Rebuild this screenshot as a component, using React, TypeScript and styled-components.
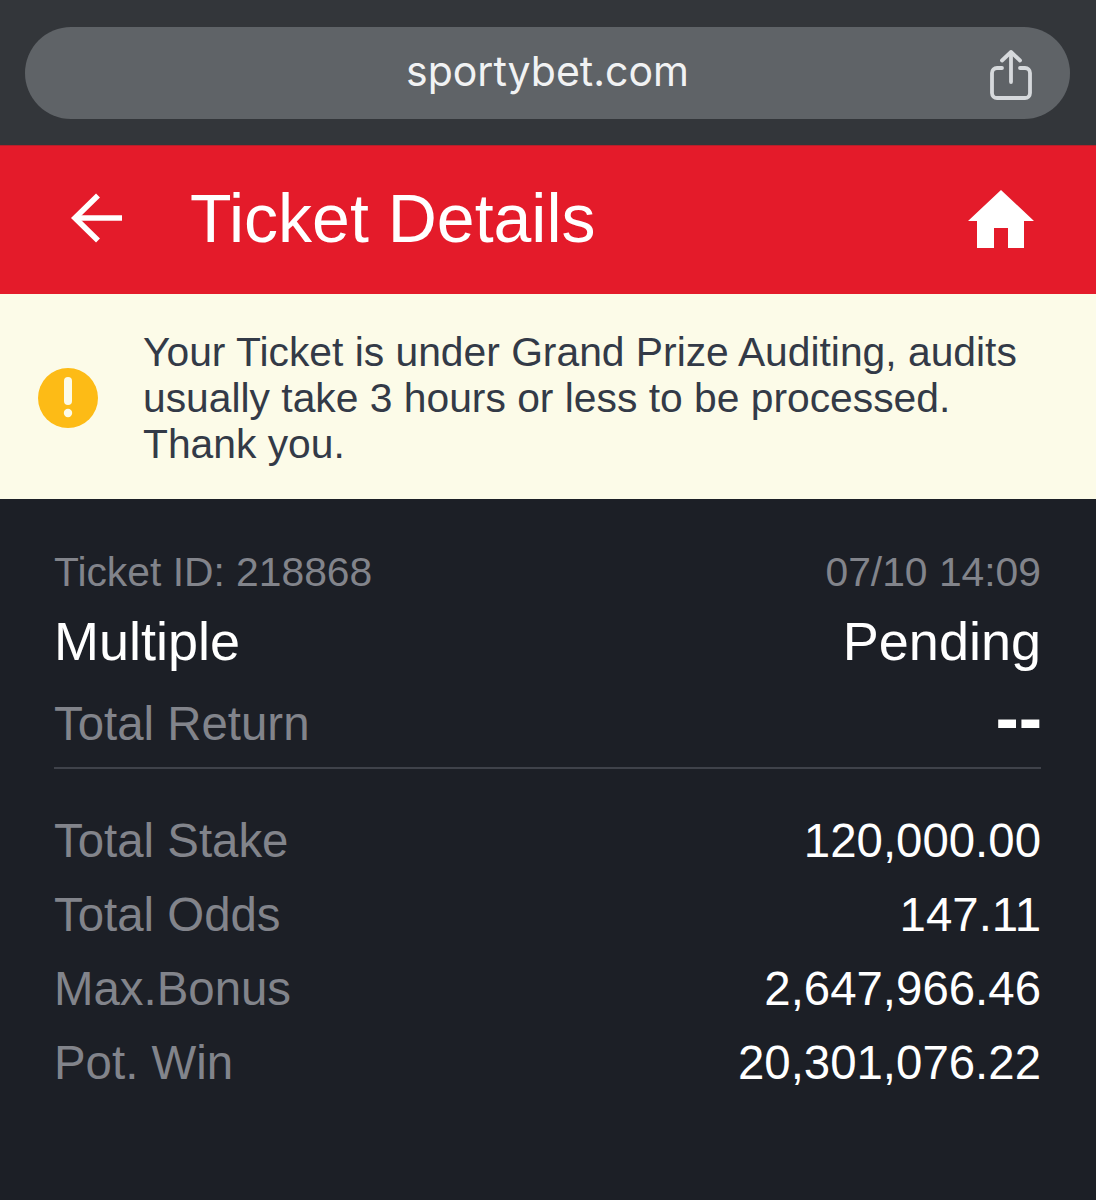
import styled, { createGlobalStyle } from "styled-components";

const GlobalStyle = createGlobalStyle`
    html, body {
        margin: 0;
        padding: 0;
        background-color: #1c1f26;
    }
    * {
        box-sizing: border-box;
    }
`;

const Page = styled.div`
    width: 1096px;
    min-height: 1200px;
    background-color: #1c1f26;
    font-family: "Liberation Sans", Arial, sans-serif;
    display: flex;
    flex-direction: column;
`;

const BrowserBar = styled.div`
    height: 145px;
    padding: 27px 26px 26px 25px;
    background-color: #33363a;
`;

const UrlPill = styled.div`
    height: 92px;
    border-radius: 46px;
    background-color: #5f6367;
    padding: 0 38px 0 0;
    display: grid;
    grid-template-columns: 1fr auto;
    align-items: center;
`;

const UrlText = styled.span`
    font-family: "Inter", "Liberation Sans", sans-serif;
    color: #f1f2f3;
    font-size: 41px;
    font-weight: 400;
    text-align: center;
    margin-left: 80px;
    margin-top: -4px;
`;

const ShareSvg = styled.svg`
    margin-top: 3px;
`;

const Header = styled.header`
    height: 149px;
    background-color: #e41b2a;
    border-top: 1px solid #b5202a;
    display: flex;
    align-items: center;
    padding: 0 62px 0 70px;
`;

const BackSvg = styled.svg`
    margin-top: -5px;
`;

const HomeSvg = styled.svg`
    margin-top: -3px;
`;

const Title = styled.h1`
    margin: -4px auto 0 66px;
    color: #fff;
    font-size: 68px;
    font-weight: 400;
`;

const Notice = styled.div`
    height: 205px;
    background-color: #fcfbe8;
    display: flex;
    align-items: center;
    padding: 2px 60px 0 38px;
    gap: 45px;
`;

const WarningSvg = styled.svg`
    flex-shrink: 0;
`;

const NoticeText = styled.p`
    margin: 0;
    color: #333a47;
    font-size: 40.8px;
    line-height: 46px;
`;

const Details = styled.section`
    padding: 50px 55px 0 54px;
`;

const Row = styled.div<{ $height: number }>`
    height: ${(props) => props.$height}px;
    display: flex;
    justify-content: space-between;
    align-items: center;
`;

const Label = styled.span<{ $size?: number }>`
    color: #82848b;
    font-size: ${(props) => props.$size ?? 47.4}px;
`;

const Value = styled.span<{ $size?: number }>`
    color: #fff;
    font-size: ${(props) => props.$size ?? 47.4}px;
`;

const EmptyValue = styled.span`
    color: #fff;
    font-size: 70px;
    font-weight: 700;
    line-height: 1;
    margin: 0 -1px 10px 0;
`;

const Divider = styled.div`
    height: 2px;
    background-color: #3f424a;
    margin: 8px 0 34px;
`;

function ShareIcon() {
    return (
        <ShareSvg width="42" height="50" viewBox="0 0 42 50" fill="none" stroke="#d6d9dc" strokeWidth="3.8" strokeLinecap="round" strokeLinejoin="round">
            <path d="M21 32V2.500" />
            <path d="M12 10.500L21 2L30 10.500" />
            <path d="M12 18H7a5 5 0 0 0-5 5V43a5 5 0 0 0 5 5H35a5 5 0 0 0 5-5V23a5 5 0 0 0-5-5H30" />
        </ShareSvg>
    );
}

function BackArrow() {
    return (
        <BackSvg width="54" height="52" viewBox="0 0 54 52" fill="none" stroke="#fff" strokeWidth="5.600">
            <path d="M52 26H5" />
            <path d="M28 3.500L5 26L28 48.500" />
        </BackSvg>
    );
}

function HomeIcon() {
    return (
        <HomeSvg width="66" height="58" viewBox="0 0 66 58" fill="#fff">
            <path d="M33 0L66 31H56V58H40V38H26V58H9V31H0Z" />
        </HomeSvg>
    );
}

function WarningIcon() {
    return (
        <WarningSvg width="60" height="60" viewBox="0 0 60 60">
            <circle cx="30" cy="30" r="30" fill="#fdbb16" />
            <rect x="26" y="9" width="8" height="28" rx="4" fill="#fcfbe8" />
            <circle cx="30" cy="45" r="4.200" fill="#fcfbe8" />
        </WarningSvg>
    );
}

export default function App() {
    return (
        <Page>
            <GlobalStyle />
            <BrowserBar>
                <UrlPill>
                    <UrlText>sportybet.com</UrlText>
                    <ShareIcon />
                </UrlPill>
            </BrowserBar>
            <Header>
                <BackArrow />
                <Title>Ticket Details</Title>
                <HomeIcon />
            </Header>
            <Notice>
                <WarningIcon />
                <NoticeText>
                    Your Ticket is under Grand Prize Auditing, audits usually take 3 hours or less to be processed. Thank you.
                </NoticeText>
            </Notice>
            <Details>
                <Row $height={46}>
                    <Label $size={40.8}>Ticket ID: 218868</Label>
                    <Label $size={40.8}>07/10 14:09</Label>
                </Row>
                <Row $height={92}>
                    <Value $size={54}>Multiple</Value>
                    <Value $size={54}>Pending</Value>
                </Row>
                <Row $height={72}>
                    <Label>Total Return</Label>
                    <EmptyValue>--</EmptyValue>
                </Row>
                <Divider />
                <Row $height={74}>
                    <Label>Total Stake</Label>
                    <Value>120,000.00</Value>
                </Row>
                <Row $height={74}>
                    <Label>Total Odds</Label>
                    <Value>147.11</Value>
                </Row>
                <Row $height={74}>
                    <Label>Max.Bonus</Label>
                    <Value>2,647,966.46</Value>
                </Row>
                <Row $height={74}>
                    <Label>Pot. Win</Label>
                    <Value>20,301,076.22</Value>
                </Row>
            </Details>
        </Page>
    );
}
